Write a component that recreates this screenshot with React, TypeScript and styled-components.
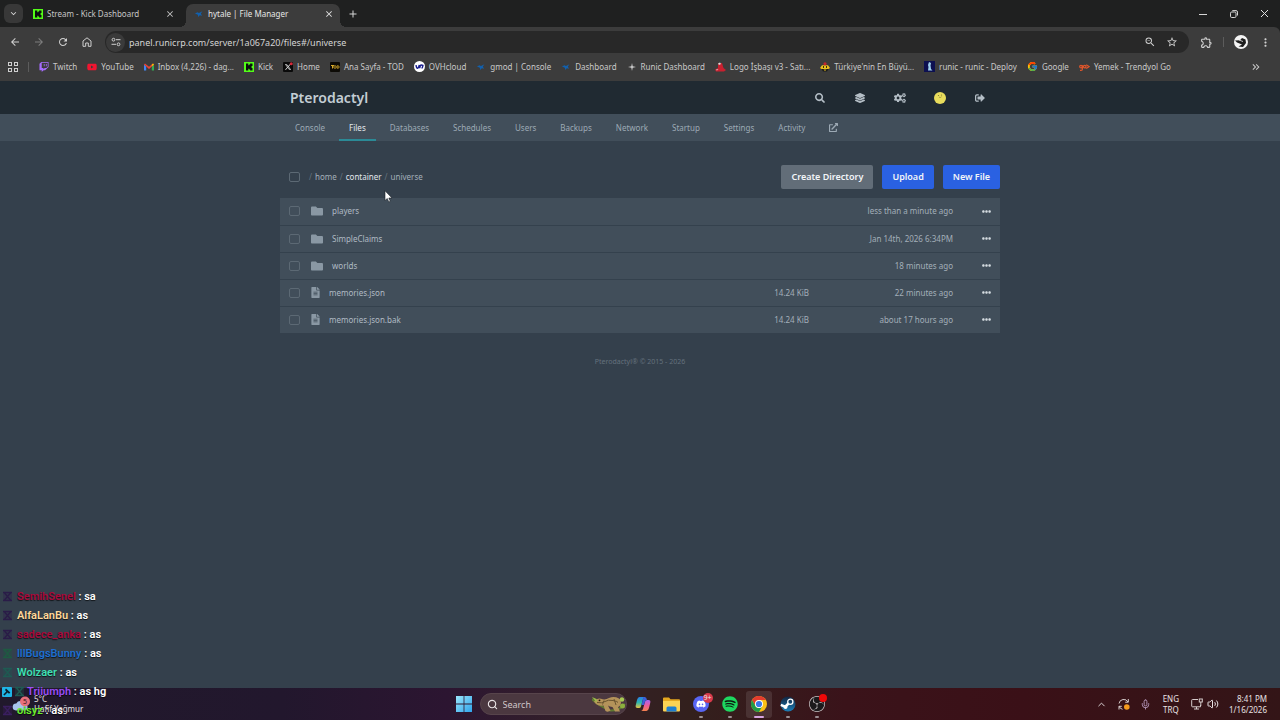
import React from "react";
import styled, { createGlobalStyle } from "styled-components";
import { FaSearch, FaLayerGroup, FaCogs, FaSignOutAlt, FaExternalLinkAlt, FaFolder, FaFileAlt, FaEllipsisH, FaTwitch, FaYoutube, FaSpotify, FaDiscord } from "react-icons/fa";
import { FaXTwitter } from "react-icons/fa6";
import { FcGoogle } from "react-icons/fc";
import { SiObsstudio } from "react-icons/si";
import { MdOutlineExtension, MdOutlineZoomOut, MdStarBorder, MdMoreVert, MdAdd, MdClose, MdArrowBack, MdArrowForward, MdRefresh, MdKeyboardArrowDown, MdKeyboardDoubleArrowRight } from "react-icons/md";
import { Mic, Volume2, ChevronUp, Search } from "lucide-react";

const uiFont = `"Noto Sans", "Open Sans", sans-serif`;

const GlobalStyle = createGlobalStyle`
  *, *::before, *::after { box-sizing: border-box; }
  body { margin: 0; background: #34404c; font-family: ${uiFont}; }
  button, input { font: inherit; color: inherit; margin: 0; }
  button { background: none; border: 0; padding: 0; cursor: pointer; }
  a { color: inherit; text-decoration: none; }
  svg { display: block; flex: none; }
`;

const Desktop = styled.div`
  position: relative;
  display: flex;
  flex-direction: column;
  min-height: 100vh;
`;

/* ---------- Browser chrome ---------- */

const TabStrip = styled.header`
  display: flex;
  align-items: flex-end;
  height: 27px;
  padding-left: 4px;
  background: #1f2020;
  color: #d6d6d6;
  font-size: 8px;
`;

const TabSearch = styled.button`
  display: flex;
  align-items: center;
  justify-content: center;
  width: 19px;
  height: 19px;
  margin: 0 2px 4px 0;
  border-radius: 6px;
  background: #383838;
`;

const Tab = styled.div<{ $active?: boolean }>`
  position: relative;
  display: flex;
  align-items: center;
  gap: 4px;
  width: ${p => (p.$active ? 154 : 161)}px;
  height: 23px;
  padding: 0 ${p => (p.$active ? 6 : 11)}px 4px 8px;
  border-radius: 7px 7px 0 0;
  background: ${p => (p.$active ? "#3c3c3c" : "transparent")};
  color: ${p => (p.$active ? "#e6e6e6" : "#c6c6c6")};

  &::before, &::after {
    content: ${p => (p.$active ? '""' : "none")};
    position: absolute;
    bottom: 0;
    width: 6px;
    height: 6px;
  }
  &::before { right: 100%; background: radial-gradient(circle at 0 0, transparent 6px, #3c3c3c 6px); }
  &::after { left: 100%; background: radial-gradient(circle at 100% 0, transparent 6px, #3c3c3c 6px); }
`;

const TabTitle = styled.span`
  flex: 1;
  white-space: nowrap;
`;

const StripButton = styled.button<{ $w: number }>`
  display: flex;
  align-items: center;
  justify-content: center;
  width: ${p => p.$w}px;
  height: 27px;
`;

const Spacer = styled.div`flex: 1;`;

const Toolbar = styled.div`
  background: #1f2020;
`;

const AddressRow = styled.div`
  display: flex;
  align-items: center;
  height: 30px;
  padding: 0 3px;
  border-radius: 0 6px 0 0;
  background: #3c3c3c;
  color: #cfcfcf;
`;

const NavButton = styled.button<{ $dim?: boolean }>`
  display: flex;
  align-items: center;
  justify-content: center;
  width: 24px;
  height: 24px;
  color: ${p => (p.$dim ? "#7d7d7d" : "#d0d0d0")};
`;

const Omnibox = styled.div`
  display: flex;
  flex: 1;
  align-items: center;
  gap: 4px;
  height: 22px;
  margin: 0 5px 0 6px;
  padding: 0 8px 0 1px;
  border-radius: 11px;
  background: #282828;
`;

const SiteInfo = styled.button`
  display: flex;
  align-items: center;
  justify-content: center;
  width: 19px;
  height: 19px;
  border-radius: 50%;
  background: #3a3a3a;
`;

const UrlInput = styled.input`
  flex: 1;
  min-width: 0;
  padding: 0;
  border: 0;
  outline: 0;
  background: transparent;
  color: #d4d4d4;
  font-size: 9px;
`;

const OmniButton = styled.button`
  display: flex;
  align-items: center;
  justify-content: center;
  width: 18px;
  height: 18px;
`;

const Divider = styled.span<{ $m: number }>`
  width: 1px;
  height: 10px;
  margin: 0 ${p => p.$m}px;
  background: #5c5c5c;
`;

const Bookmarks = styled.nav`
  display: flex;
  align-items: center;
  height: 24px;
  padding: 0 18px 5px 8px;
  background: #3c3c3c;
  color: #c9c9c9;
  font-size: 8px;
`;

const BookmarkLink = styled.a`
  display: flex;
  align-items: center;
  gap: 4px;
  margin-right: 10px;
  white-space: nowrap;
`;

/* ---------- Panel ---------- */

const PanelHeader = styled.header`
  background: #202a32;
  color: #c3cdd4;
`;

const Center = styled.div`
  display: flex;
  align-items: center;
  width: 100%;
  max-width: 720px;
  margin: 0 auto;
`;

const HeaderInner = styled(Center)`
  height: 33px;
  padding-left: 10px;
`;

const Brand = styled.a`
  flex: 1;
  font: 600 14px/20px ${uiFont};
`;

const HeaderButton = styled.button`
  display: flex;
  align-items: center;
  justify-content: center;
  width: 40px;
  height: 33px;
  color: #b4bec6;
`;

const SubNav = styled.nav`
  background: #414e5a;
  color: #9daab5;
  font: 8px/12px ${uiFont};
`;

const SubNavInner = styled(Center)`
  gap: 4px;
  height: 27px;
  padding-left: 5px;
`;

const SubNavLink = styled.a<{ $active?: boolean }>`
  display: flex;
  align-items: center;
  height: 27px;
  padding: 0 10px;
  color: ${p => (p.$active ? "#e4eaee" : "inherit")};
  box-shadow: ${p => (p.$active ? "inset 0 -2px #2b8a96" : "none")};
`;

const Main = styled.main`
  flex: 1;
  width: 100%;
  max-width: 720px;
  margin: 0 auto;
  padding-top: 24px;
  font: 8px/12px ${uiFont};
  color: #a3afb9;
`;

const FileToolbar = styled.div`
  display: flex;
  align-items: center;
  height: 24px;
  margin-bottom: 9px;
  padding-left: 9px;
`;

const Check = styled.input.attrs({ type: "checkbox" })`
  appearance: none;
  display: block;
  width: 11px;
  height: 10px;
  border: 1px solid #5c6974;
  border-radius: 2px;
`;

const Breadcrumbs = styled.nav`
  display: flex;
  flex: 1;
  gap: 3px;
  margin-left: 9px;
  color: #66737e;
  a, span { color: #a3afb9; }
`;

const CrumbCurrent = styled.a`
  && { color: #e2e8ec; }
`;

const ActionButton = styled.button<{ $primary?: boolean }>`
  height: 24px;
  margin-left: 9px;
  padding: 0 10px;
  border-radius: 2px;
  background: ${p => (p.$primary ? "#2a61e2" : "#626d78")};
  color: #f2f5f8;
  font-size: 9px;
  font-weight: 600;
`;

const FileTable = styled.table`
  width: 100%;
  border-collapse: collapse;
  table-layout: fixed;
`;

const FileRow = styled.tr`
  background: #414e5a;
  & + & { border-top: 1px solid #34414d; }
`;

const Cell = styled.td<{ $w?: number }>`
  width: ${p => (p.$w ? p.$w + "px" : "auto")};
  height: 27px;
  padding: 0;
`;

const CheckCell = styled(Cell)`padding-left: 9px;`;

const RightCell = styled(Cell)<{ $pad?: number }>`
  padding-right: ${p => p.$pad || 0}px;
  text-align: right;
`;

const FileName = styled.a<{ $folder?: boolean }>`
  display: flex;
  align-items: center;
  gap: 9px;
  color: #b0bbc4;
  svg {
    width: ${p => (p.$folder ? 12 : 9)}px;
    color: #8a98a4;
  }
`;

const RowMenu = styled.button`
  display: flex;
  align-items: center;
  justify-content: center;
  width: 28px;
  height: 24px;
  color: #d5dce1;
`;

const Footer = styled.footer`
  margin-top: 23px;
  text-align: center;
  font-size: 7px;
  color: #64717d;
`;

/* ---------- Overlays ---------- */

const Cursor = styled.svg`
  position: absolute;
  left: 384px;
  top: 190px;
`;

const Chat = styled.ul`
  position: absolute;
  left: 2px;
  bottom: 0;
  margin: 0;
  padding: 0;
  list-style: none;
  font: 600 11px/19px Roboto, sans-serif;
  color: #fff;
`;

const ChatLine = styled.li<{ $tight?: boolean }>`
  display: flex;
  align-items: center;
  gap: ${p => (p.$tight ? 2 : 4)}px;
  height: 19px;
  text-shadow: 0 1px 1px rgba(0, 0, 0, 0.7);
`;

const ChatName = styled.span<{ $c: string }>`color: ${p => p.$c};`;

/* ---------- Taskbar ---------- */

const Taskbar = styled.footer`
  display: grid;
  grid-template-columns: 1fr auto 1fr;
  align-items: center;
  height: 32px;
  background: linear-gradient(90deg, #21192c 0%, #22172d 22%, #2c1531 35%, #33202a 44%, #33201d 54%, #3a131a 66%, #3a1017 80%, #331517 100%);
  color: #e8e2e4;
  font-size: 8px;
`;

const Weather = styled.button`
  display: flex;
  align-items: center;
  gap: 4px;
  padding-left: 12px;
  text-align: left;
  line-height: 10px;
`;

const Dock = styled.div`
  display: flex;
  align-items: center;
  gap: 3px;
`;

const DockApp = styled.button<{ $state?: "open" | "active" }>`
  position: relative;
  display: flex;
  align-items: center;
  justify-content: center;
  width: 26px;
  height: 27px;
  border-radius: 3px;
  background: ${p => (p.$state === "active" ? "rgba(255,255,255,0.1)" : "none")};

  &::after {
    content: "";
    position: absolute;
    bottom: 0;
    width: ${p => (p.$state === "active" ? 10 : 4)}px;
    height: 2px;
    border-radius: 1px;
    background: ${p => (p.$state === "active" ? "#d7a4e0" : p.$state ? "#9b8f93" : "transparent")};
  }
`;

const AppBadge = styled.span<{ $dot?: boolean }>`
  position: absolute;
  top: ${p => (p.$dot ? 3 : 2)}px;
  right: ${p => (p.$dot ? 3 : 1)}px;
  width: ${p => (p.$dot ? 8 : 10)}px;
  height: ${p => (p.$dot ? 8 : 10)}px;
  border-radius: 50%;
  background: ${p => (p.$dot ? "#f00808" : "#d93a4c")};
  font-size: 7px;
  line-height: 10px;
`;

const TaskSearch = styled.label`
  display: flex;
  align-items: center;
  gap: 5px;
  width: 147px;
  height: 22px;
  padding-left: 6px;
  border: 1px solid #57444b;
  border-radius: 11px;
  background: #4b3840;
  overflow: hidden;
`;

const SearchInput = styled.input`
  flex: 1;
  min-width: 0;
  padding: 0;
  border: 0;
  outline: 0;
  background: transparent;
  font-size: 9px;
  &::placeholder { color: #cfc6c9; opacity: 1; }
`;

const Tray = styled.div`
  display: flex;
  align-items: center;
  justify-content: flex-end;
  padding-right: 13px;
  line-height: 11px;
`;

const TrayButton = styled.button<{ $gap: number }>`
  margin-right: ${p => p.$gap}px;
  text-align: ${p => (p.$gap ? "center" : "right")};
`;

/* ---------- Drawings ---------- */

const KickIcon = () => (
  <svg width="10" height="10" viewBox="0 0 10 10"><rect width="10" height="10" fill="#53fc18" /><path d="M2 1.500h2.300v1.800h.9v-.9h.9v-.9h2.400v2.600h-.9V5v.9h.9v2.600H6.100v-.9h-.9v-.9h-.9v1.800H2z" fill="#0b0e0f" /></svg>
);
const BirdIcon = () => (
  <svg width="10" height="10" viewBox="0 0 10 10"><path d="M1 4.600 3.500 3.200 5 4 8.500 2.200 6.800 4.600 8 6.800 5.800 6.200 4.300 8 3.800 5.800z" fill="#1260ad" /></svg>
);
const GmailIcon = () => (
  <svg width="10" height="10" viewBox="0 0 10 10"><path d="M0 2.500V8.500h2.200V4.500z" fill="#4285f4" /><path d="M10 2.500V8.500H7.800V4.500z" fill="#34a853" /><path d="M0 2.500 1 1.500 5 4.700 9 1.500 10 2.500 5 7z" fill="#ea4335" /><path d="M10 2.500 9 1.500 7.800 2.500V4.500z" fill="#fbbc04" /></svg>
);
const XIcon = () => (
  <svg width="10" height="10" viewBox="0 0 20 20"><rect width="20" height="20" rx="2" fill="#0a0a0a" /><FaXTwitter x={3} y={3} size={14} color="#f1f1f1" /><circle cx="16.500" cy="3.500" r="3" fill="#d62a3a" /></svg>
);
const TodIcon = () => (
  <svg width="10" height="10" viewBox="0 0 10 10"><rect width="10" height="10" rx="1" fill="#0d0b06" /><path d="M1 3.500h3M2.500 3.500v3" stroke="#d8a92a" /><circle cx="5" cy="5" r="1.300" fill="none" stroke="#d8a92a" strokeWidth=".8" /><path d="M7.200 3.700h.6a1.300 1.300 0 0 1 0 2.600h-.6z" fill="none" stroke="#d8a92a" strokeWidth=".8" /></svg>
);
const OvhIcon = () => (
  <svg width="11" height="11" viewBox="0 0 11 11"><circle cx="5.500" cy="5.500" r="5.500" fill="#fff" /><path d="M2 4.200Q2.600 7.400 3.600 7.200T5.300 3.800M5.700 7.200Q6.200 3.800 7.200 3.900T8.900 4.400Q8.600 7 7.600 7.200" stroke="#1a1f8f" strokeWidth="1.500" fill="none" /></svg>
);
const SparkIcon = () => (
  <svg width="10" height="10" viewBox="0 0 10 10"><path d="M5 1 5.700 4.300 9 5 5.700 5.700 5 9 4.300 5.700 1 5 4.300 4.300z" fill="#cfcfcf" /></svg>
);
const LogoIcon = () => (
  <svg width="11" height="10" viewBox="0 0 11 10"><path d="M3 1.500 7 1 8.500 6 11 8 9 9.500H1L0 7.500 3 6z" fill="#c8202f" /><path d="M3 1.500 5 .5 6 2 4 3zM1.500 7l2 .8-2 .8z" fill="#d9d9d9" /></svg>
);
const TurkIcon = () => (
  <svg width="10" height="10" viewBox="0 0 10 10"><path d="M0 6 2 3.200h6L10 6 8.500 7h-7z" fill="#e8c01c" /><circle cx="5" cy="1.800" r="1.600" fill="#c4262c" /><path d="M1.500 7h7L7 9.500H3z" fill="#1a1a1a" /><path d="M3.500 4v2M6.500 4v2" stroke="#3a2c10" /><path d="M3.500 7.500h3L5 9z" fill="#e8c01c" /></svg>
);
const RunicIcon = () => (
  <svg width="11" height="11" viewBox="0 0 11 11"><rect width="11" height="11" fill="#0d1050" /><path d="M5 1 7 2 6.500 4.500 7 8 8.500 9.500H4L4.500 6 4 4z" fill="#9fd0ee" /></svg>
);
const GoIcon = () => (
  <svg width="11" height="10" viewBox="0 0 11 10" fill="none" stroke="#e0562b" strokeWidth="1.200"><circle cx="2" cy="4.600" r="1.300" /><path d="M3.400 3.200v4q0 1.200-1.300 1.200H1" /><circle cx="5.700" cy="4.600" r="1.300" /><path d="M7.200 2.800 10 4.600 7.200 6.400" /></svg>
);
const GridIcon = () => (
  <svg width="10" height="10" viewBox="0 0 10 10" fill="none" stroke="#cfcfcf"><rect x=".5" y=".5" width="3" height="3" /><rect x="6.500" y=".5" width="3" height="3" /><rect x=".5" y="6.500" width="3" height="3" /><rect x="6.500" y="6.500" width="3" height="3" /></svg>
);
const HomeIcon = () => (
  <svg width="10" height="10" viewBox="0 0 10 10" fill="none" stroke="currentColor"><path d="M1 4 5 .8 9 4V9.300H6.300V6H3.700V9.300H1z" /></svg>
);
const TuneIcon = () => (
  <svg width="10" height="10" viewBox="0 0 10 10" fill="none" stroke="#d0d0d0"><circle cx="2.500" cy="2.700" r="1.400" /><path d="M5 2.700h4.500M.5 7.300H5" /><circle cx="7.500" cy="7.300" r="1.400" /></svg>
);
const AvatarIcon = () => (
  <svg width="14" height="14" viewBox="0 0 14 14"><circle cx="7" cy="7" r="7" fill="#f4f4f4" /><path d="M1 5.500 6 5.200 8 3 11.500 4.500 12 8 9 12 4.500 11.500 8 9.500 3 7.500z" fill="#1d1d1d" /><path d="M5 5 9 6.500" stroke="#e8e8e8" strokeWidth=".8" /></svg>
);
const UserIcon = () => (
  <svg width="12" height="12" viewBox="0 0 12 12"><circle cx="6" cy="6" r="6" fill="#e8dc5c" /><circle cx="4.500" cy="3.500" r=".6" fill="#7d7530" /><circle cx="7.500" cy="3" r=".6" fill="#7d7530" /><path d="M5 5.200q1.500.8 2.600-.5" stroke="#7d7530" strokeWidth=".6" fill="none" /></svg>
);
const MinimizeIcon = () => (
  <svg width="8" height="8" viewBox="0 0 8 8"><path d="M0 4.500h8" stroke="#d6d6d6" /></svg>
);
const RestoreIcon = () => (
  <svg width="8" height="8" viewBox="0 0 8 8" fill="none" stroke="#d6d6d6"><rect x=".5" y="2" width="5.500" height="5.500" rx="1.200" /><path d="M2.300.6H6q1.500 0 1.500 1.500V5.500" /></svg>
);
const CloseIcon = () => (
  <svg width="9" height="9" viewBox="0 0 9 9"><path d="M1 1 8 8M8 1 1 8" stroke="#e0e0e0" /></svg>
);
const ChatBadge = ({ c }: { c: string }) => (
  <svg width="11" height="11" viewBox="0 0 11 11"><rect x="1" y="1" width="9" height="9" fill={c} opacity=".3" /><path d="M1 1.500h9M1 9.500h9M2.500 2 8.500 9M8.500 2 2.500 9" stroke={c} strokeWidth="1.300" fill="none" /></svg>
);
const ModBadge = () => (
  <svg width="10" height="10" viewBox="0 0 10 10"><rect width="10" height="10" rx="1" fill="#1fb4e6" /><path d="M4 1.500 8.300 5.500 7 6.800 5.500 5.500 2.500 8.600 1.300 7.500 4.300 4.400 3 3z" fill="#0b1f2c" /></svg>
);
const WeatherIcon = () => (
  <svg width="18" height="17" viewBox="0 0 18 17"><path d="M4 14.500a3.500 3.500 0 0 1 .3-7A4.500 4.500 0 0 1 12.500 8a3.300 3.300 0 0 1 .5 6.500z" fill="#a9c4ec" /><path d="M6 15.500 5.500 17M10 15.500 9.500 17" stroke="#4b8fe0" /><circle cx="13" cy="5.500" r="5" fill="#e8707c" /><text x="13" y="8" fontSize="7" textAnchor="middle" fill="#3a1820">5</text></svg>
);
const WindowsIcon = () => (
  <svg width="16" height="16" viewBox="0 0 16 16"><defs><linearGradient id="win" x2="1" y2="1"><stop stopColor="#9be6fb" /><stop offset="1" stopColor="#2fa4ec" /></linearGradient></defs><path d="M0 0h7.600v7.600H0zM8.400 0H16v7.600H8.400zM0 8.400h7.600V16H0zM8.400 8.400H16V16H8.400z" fill="url(#win)" /></svg>
);
const LizardArt = () => (
  <svg width="34" height="20" viewBox="0 0 34 20"><path d="M0 5Q4 9 9 12T18 16.500Q27 17 33 10" stroke="#5f7a30" strokeWidth="2" fill="none" /><path d="M2 7.500Q5 3.500 9 4.800Q13 6.500 17 4Q22 2 27 4.500Q30 7 28.500 11Q27 13 26 13L28 17.500H23L20.500 13Q17.500 12.500 16 11.500L18.500 16.500Q16 18.500 13.500 17L11.500 11.500Q7 12.500 4 10z" fill="#b4935a" /><path d="M5 8.500Q10 9.500 13 7.500T21 6.500 26 8.500M12 6.500 10.500 10.500M22 5l2 6" stroke="#6b5530" fill="none" /><path d="M0 3 4.500 5 5 9z" fill="#9cc24a" /><circle cx="30" cy="5.500" r="2.300" fill="#a8c952" /><circle cx="30.500" cy="12" r="2.500" fill="#8cb03e" /><circle cx="7.500" cy="6.300" r=".9" fill="#20180c" /></svg>
);
const CopilotIcon = () => (
  <svg width="16" height="16" viewBox="0 0 16 16"><defs><linearGradient id="cpA" x2="0" y2="1"><stop stopColor="#2a7de8" /><stop offset=".5" stopColor="#2cb7b0" /><stop offset="1" stopColor="#e8c441" /></linearGradient><linearGradient id="cpB" x2="0" y2="1"><stop stopColor="#a565f0" /><stop offset=".5" stopColor="#ec5c9c" /><stop offset="1" stopColor="#f5824c" /></linearGradient></defs><path d="M4.500 1h5.300Q8.500 1.300 8 3L6 10.500Q5.500 12 4 12H2.500Q0 12 .8 9L2 4Q2.800 1 4.500 1z" fill="url(#cpA)" /><path d="M11.500 15H6.200Q7.500 14.700 8 13l2-7.500Q10.500 4 12 4h1.500Q16 4 15.200 7L14 12q-.8 3-2.500 3z" fill="url(#cpB)" /><path d="M8.500 1h1.300q1.700 0 2.200 3-1.500 0-2 1.500L9 9H6.500L8 3z" fill="#3c5fd8" /></svg>
);
const FolderIcon = () => (
  <svg width="17" height="15" viewBox="0 0 17 15"><path d="M0 1.500Q0 .5 1 .5h5l1.500 1.800H16q1 0 1 1V13H0z" fill="#e6a81f" /><path d="M0 4h17v9.500q0 1-1 1H1q-1 0-1-1z" fill="#fbd354" /><path d="M3.500 14.500V11q0-1.500 1.500-1.500h7q1.500 0 1.500 1.500v3.500z" fill="#1f7fd0" /></svg>
);
const DiscordIcon = () => (
  <svg width="16" height="16" viewBox="0 0 16 16"><circle cx="8" cy="8" r="8" fill="#5865f2" /><FaDiscord x={3} y={3} size={10} color="#fff" /></svg>
);
const ChromeIcon = () => (
  <svg width="16" height="16" viewBox="0 0 16 16"><circle cx="8" cy="8" r="8" fill="#fbc116" /><path d="M1.070 4A8 8 0 0 1 14.930 4H8A4 4 0 0 0 4.540 10z" fill="#e33b2e" /><path d="M1.070 4A8 8 0 0 0 8 16L11.460 10A4 4 0 0 1 4.540 10z" fill="#229a48" /><circle cx="8" cy="8" r="4" fill="#fff" /><circle cx="8" cy="8" r="3.100" fill="#3b78e7" /></svg>
);
const SteamIcon = () => (
  <svg width="16" height="16" viewBox="0 0 16 16"><defs><linearGradient id="stm" x2="0" y2="1"><stop stopColor="#12243f" /><stop offset="1" stopColor="#1c7fb8" /></linearGradient></defs><circle cx="8" cy="8" r="7.500" fill="url(#stm)" /><circle cx="10.300" cy="5.800" r="2.600" fill="none" stroke="#fff" strokeWidth="1.300" /><path d="M8.500 7.500 5.500 10.500M.8 8.800 5.500 10.800" stroke="#fff" strokeWidth="2.500" /><circle cx="5.500" cy="11" r="2" fill="#fff" /></svg>
);
const SpotifyIcon = () => (
  <svg width="16" height="16" viewBox="0 0 16 16"><circle cx="8" cy="8" r="7" fill="#0c1a10" /><FaSpotify size={16} color="#1ed760" /></svg>
);
const ObsIcon = () => (
  <svg width="16" height="16" viewBox="0 0 16 16"><circle cx="8" cy="8" r="7.500" fill="#1c1a1c" /><SiObsstudio size={16} color="#c9c5c6" /></svg>
);
const SyncIcon = () => (
  <svg width="12" height="13" viewBox="0 0 12 13" fill="none" stroke="#d6cccc"><path d="M1 5.500A4.800 4.800 0 0 1 10 4M10.300 1v3.200H7.200M1 8A4.800 4.800 0 0 0 4.500 11.300M1 11.500V8.300H3.800" /><circle cx="8.800" cy="9" r="2.800" fill="#f59a1e" stroke="none" /></svg>
);
const NetIcon = () => (
  <svg width="12" height="12" viewBox="0 0 12 12" fill="none" stroke="#d6cccc"><path d="M7 1.500H1.500Q.7 1.500.7 2.300V8q0 .8.800.8H9.500V7M3 11h5M5.500 9v2" /><rect x="8.300" y="1" width="3" height="3" /><path d="M9.800 4v4" /></svg>
);

/* ---------- Data ---------- */

const bookmarks: [React.ReactNode, string][] = [
  [<FaTwitch size={10} color="#a66cff" />, "Twitch"],
  [<FaYoutube size={10} color="#f01530" />, "YouTube"],
  [<GmailIcon />, "Inbox (4,226) - dag..."],
  [<KickIcon />, "Kick"],
  [<XIcon />, "Home"],
  [<TodIcon />, "Ana Sayfa - TOD"],
  [<OvhIcon />, "OVHcloud"],
  [<BirdIcon />, "gmod | Console"],
  [<BirdIcon />, "Dashboard"],
  [<SparkIcon />, "Runic Dashboard"],
  [<LogoIcon />, "Logo İşbaşı v3 - Satı..."],
  [<TurkIcon />, "Türkiye'nin En Büyü..."],
  [<RunicIcon />, "runic - runic - Deploy"],
  [<FcGoogle size={11} />, "Google"],
  [<GoIcon />, "Yemek - Trendyol Go"],
];

const sections = ["Console", "Files", "Databases", "Schedules", "Users", "Backups", "Network", "Startup", "Settings", "Activity"];

const files = [
  { name: "players", folder: true, size: "", date: "less than a minute ago" },
  { name: "SimpleClaims", folder: true, size: "", date: "Jan 14th, 2026 6:34PM" },
  { name: "worlds", folder: true, size: "", date: "18 minutes ago" },
  { name: "memories.json", folder: false, size: "14.24 KiB", date: "22 minutes ago" },
  { name: "memories.json.bak", folder: false, size: "14.24 KiB", date: "about 17 hours ago" },
];

const chat = [
  { name: "SemihSenel", text: "sa", color: "#a8083a", badge: "#2a1c48" },
  { name: "AlfaLanBu", text: "as", color: "#ffd899", badge: "#2a1c48" },
  { name: "sadece_anka", text: "as", color: "#a8083a", badge: "#2a1c48" },
  { name: "lllBugsBunny", text: "as", color: "#1f6fd0", badge: "#1f5a42" },
  { name: "Wolzaer", text: "as", color: "#3fe0b4", badge: "#1f5a52" },
  { name: "Triiumph", text: "as hg", color: "#9a4df5", badge: "#1f5a52", mod: true },
  { name: "oisyz", text: "as", color: "#6cf02c", badge: "#3a1f5f" },
];

export default function App() {
  return (
    <Desktop>
      <GlobalStyle />
      <TabStrip>
        <TabSearch aria-label="Search tabs"><MdKeyboardArrowDown size={11} /></TabSearch>
        <Tab>
          <KickIcon />
          <TabTitle>Stream - Kick Dashboard</TabTitle>
          <button aria-label="Close tab"><MdClose size={10} /></button>
        </Tab>
        <Tab $active>
          <BirdIcon />
          <TabTitle>hytale | File Manager</TabTitle>
          <button aria-label="Close tab"><MdClose size={10} /></button>
        </Tab>
        <StripButton $w={26} aria-label="New tab"><MdAdd size={12} /></StripButton>
        <Spacer />
        <StripButton $w={31} aria-label="Minimize"><MinimizeIcon /></StripButton>
        <StripButton $w={31} aria-label="Restore"><RestoreIcon /></StripButton>
        <StripButton $w={31} aria-label="Close"><CloseIcon /></StripButton>
      </TabStrip>
      <Toolbar>
        <AddressRow>
          <NavButton aria-label="Back"><MdArrowBack size={12} /></NavButton>
          <NavButton $dim aria-label="Forward"><MdArrowForward size={12} /></NavButton>
          <NavButton aria-label="Reload"><MdRefresh size={12} /></NavButton>
          <NavButton aria-label="Home"><HomeIcon /></NavButton>
          <Omnibox>
            <SiteInfo aria-label="Site information"><TuneIcon /></SiteInfo>
            <UrlInput aria-label="Address" defaultValue="panel.runicrp.com/server/1a067a20/files#/universe" />
            <OmniButton aria-label="Zoom"><MdOutlineZoomOut size={12} /></OmniButton>
            <OmniButton aria-label="Bookmark this page"><MdStarBorder size={12} /></OmniButton>
          </Omnibox>
          <NavButton aria-label="Extensions"><MdOutlineExtension size={13} /></NavButton>
          <Divider $m={5} />
          <NavButton aria-label="Profile"><AvatarIcon /></NavButton>
          <NavButton aria-label="Menu"><MdMoreVert size={13} /></NavButton>
        </AddressRow>
      </Toolbar>
      <Bookmarks aria-label="Bookmarks">
        <GridIcon />
        <Divider $m={10} />
        {bookmarks.map(([icon, label]) => <BookmarkLink key={label} href="#">{icon}{label}</BookmarkLink>)}
        <Spacer />
        <button aria-label="More bookmarks"><MdKeyboardDoubleArrowRight size={12} /></button>
      </Bookmarks>

      <PanelHeader>
        <HeaderInner>
          <Brand href="#">Pterodactyl</Brand>
          <HeaderButton aria-label="Search"><FaSearch size={10} /></HeaderButton>
          <HeaderButton aria-label="Servers"><FaLayerGroup size={10} /></HeaderButton>
          <HeaderButton aria-label="Admin"><FaCogs size={12} /></HeaderButton>
          <HeaderButton aria-label="Account"><UserIcon /></HeaderButton>
          <HeaderButton aria-label="Sign out"><FaSignOutAlt size={10} /></HeaderButton>
        </HeaderInner>
      </PanelHeader>
      <SubNav aria-label="Server">
        <SubNavInner>
          {sections.map(s => <SubNavLink key={s} href="#" $active={s === "Files"}>{s}</SubNavLink>)}
          <SubNavLink href="#" aria-label="Open in admin"><FaExternalLinkAlt size={9} /></SubNavLink>
        </SubNavInner>
      </SubNav>

      <Main>
        <FileToolbar>
          <Check aria-label="Select all" />
          <Breadcrumbs aria-label="Path">
            /<a href="#">home</a>/<CrumbCurrent href="#">container</CrumbCurrent>/<span>universe</span>
          </Breadcrumbs>
          <ActionButton>Create Directory</ActionButton>
          <ActionButton $primary>Upload</ActionButton>
          <ActionButton $primary>New File</ActionButton>
        </FileToolbar>
        <FileTable>
          <tbody>
            {files.map(f => (
              <FileRow key={f.name}>
                <CheckCell $w={31}><Check aria-label={`Select ${f.name}`} /></CheckCell>
                <Cell>
                  <FileName href="#" $folder={f.folder}>
                    {f.folder ? <FaFolder size={12} /> : <FaFileAlt size={11} />}
                    {f.name}
                  </FileName>
                </Cell>
                <RightCell $w={80}>{f.size}</RightCell>
                <RightCell $w={163} $pad={19}>{f.date}</RightCell>
                <Cell $w={28}><RowMenu aria-label={`Actions for ${f.name}`}><FaEllipsisH size={9} /></RowMenu></Cell>
              </FileRow>
            ))}
          </tbody>
        </FileTable>
        <Footer>Pterodactyl® © 2015 - 2026</Footer>
      </Main>

      <Taskbar>
        <Weather><WeatherIcon /><span>5°C<br />Hafif Yağmur</span></Weather>
        <Dock>
          <DockApp aria-label="Start"><WindowsIcon /></DockApp>
          <TaskSearch>
            <Search size={11} strokeWidth={2.5} />
            <SearchInput placeholder="Search" aria-label="Search" />
            <LizardArt />
          </TaskSearch>
          <DockApp aria-label="Copilot"><CopilotIcon /></DockApp>
          <DockApp aria-label="File Explorer"><FolderIcon /></DockApp>
          <DockApp aria-label="Discord" $state="open"><DiscordIcon /><AppBadge>9+</AppBadge></DockApp>
          <DockApp aria-label="Spotify" $state="open"><SpotifyIcon /></DockApp>
          <DockApp aria-label="Chrome" $state="active"><ChromeIcon /></DockApp>
          <DockApp aria-label="Steam" $state="open"><SteamIcon /></DockApp>
          <DockApp aria-label="OBS Studio" $state="open"><ObsIcon /><AppBadge $dot /></DockApp>
        </Dock>
        <Tray>
          <TrayButton $gap={11} aria-label="Hidden icons"><ChevronUp size={11} /></TrayButton>
          <TrayButton $gap={10} aria-label="Updates"><SyncIcon /></TrayButton>
          <TrayButton $gap={12} aria-label="Microphone"><Mic size={11} color="#b99ac0" /></TrayButton>
          <TrayButton $gap={12}>ENG<br />TRQ</TrayButton>
          <TrayButton $gap={4} aria-label="Network"><NetIcon /></TrayButton>
          <TrayButton $gap={10} aria-label="Volume"><Volume2 size={12} /></TrayButton>
          <TrayButton $gap={0}>8:41 PM<br />1/16/2026</TrayButton>
        </Tray>
      </Taskbar>

      <Chat>
        {chat.map(m => (
          <ChatLine key={m.name} $tight={m.mod}>
            {m.mod && <ModBadge />}
            <ChatBadge c={m.badge} />
            <span><ChatName $c={m.color}>{m.name}</ChatName> : {m.text}</span>
          </ChatLine>
        ))}
      </Chat>
      <Cursor width="9" height="13" viewBox="0 0 9 13"><path d="M1 .8V10.500L3.300 8.500 4.800 12 6.300 11.300 4.800 8H8z" fill="#fff" stroke="#1a2027" strokeWidth=".6" /></Cursor>
    </Desktop>
  );
}
